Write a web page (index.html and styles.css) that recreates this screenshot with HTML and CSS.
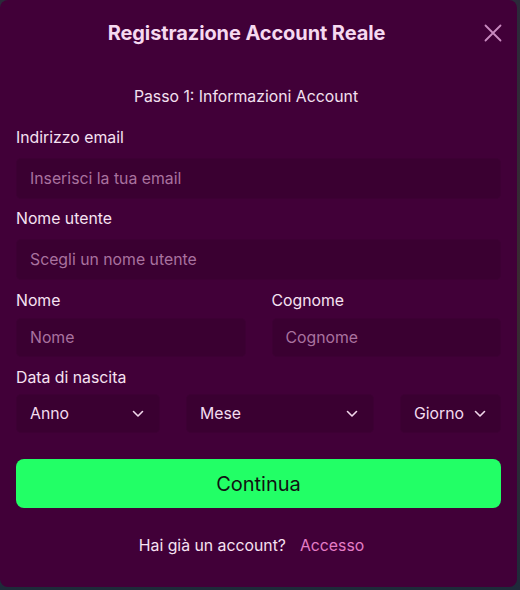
FILE: index.html
```html
<!DOCTYPE html>
<html lang="it">
<head>
<meta charset="utf-8">
<title>Registrazione Account Reale</title>
<link rel="stylesheet" href="styles.css">
</head>
<body>
<div class="modal">
  <div class="header">
    <h1 class="title">Registrazione Account Reale</h1>
    <button class="close" aria-label="Chiudi">
      <svg width="18" height="18" viewBox="0 0 18 18"><path d="M1.5 1.5 L16.5 16.5 M16.5 1.5 L1.5 16.5" stroke="#c98ac0" stroke-width="1.8" stroke-linecap="round" fill="none"/></svg>
    </button>
  </div>
  <div class="step">Passo 1: Informazioni Account</div>

  <div class="field">
    <label class="label">Indirizzo email</label>
    <div class="input">Inserisci la tua email</div>
  </div>
  <div class="field">
    <label class="label">Nome utente</label>
    <div class="input">Scegli un nome utente</div>
  </div>
  <div class="row2">
    <div class="field">
      <label class="label">Nome</label>
      <div class="input short">Nome</div>
    </div>
    <div class="field">
      <label class="label">Cognome</label>
      <div class="input short">Cognome</div>
    </div>
  </div>
  <div class="field">
    <label class="label">Data di nascita</label>
    <div class="dates">
      <div class="select anno"><span>Anno</span><svg class="chev" width="12" height="8" viewBox="0 0 12 8"><path d="M1.5 1.5 L6 6 L10.5 1.5" stroke="#f0d6ea" stroke-width="1.6" fill="none" stroke-linecap="round" stroke-linejoin="round"/></svg></div>
      <div class="select mese"><span>Mese</span><svg class="chev" width="12" height="8" viewBox="0 0 12 8"><path d="M1.5 1.5 L6 6 L10.5 1.5" stroke="#f0d6ea" stroke-width="1.6" fill="none" stroke-linecap="round" stroke-linejoin="round"/></svg></div>
      <div class="select giorno"><span>Giorno</span><svg class="chev" width="12" height="8" viewBox="0 0 12 8"><path d="M1.5 1.5 L6 6 L10.5 1.5" stroke="#f0d6ea" stroke-width="1.6" fill="none" stroke-linecap="round" stroke-linejoin="round"/></svg></div>
    </div>
  </div>

  <button class="continue">Continua</button>

  <div class="footer">Hai già un account?<a class="login" href="#">Accesso</a></div>
</div>
</body>
</html>
```
FILE: styles.css
```css
html, body {
  margin: 0;
  padding: 0;
}
body {
  width: 520px;
  height: 590px;
  background: linear-gradient(180deg, #2a2a3a 0%, #3a2a30 50%, #1e2a3a 100%);
  font-family: Inter, "Noto Sans", "Liberation Sans", sans-serif;
  overflow: hidden;
}
.modal {
  box-sizing: border-box;
  width: 517px;
  height: 587px;
  background: #410038;
  border-radius: 8px;
  padding: 0 16px;
  display: flex;
  flex-direction: column;
  color: #f3dcef;
}
.header {
  position: relative;
  height: 66px;
  display: flex;
  align-items: center;
  justify-content: center;
}
.title {
  margin: 0;
  font-size: 20px;
  font-weight: 700;
  color: #f6d9f0;
  letter-spacing: -0.1px;
  padding-right: 24px;
}
.close {
  position: absolute;
  right: -1px;
  top: 24px;
  background: none;
  border: 0;
  padding: 0;
  width: 18px;
  height: 18px;
  display: flex;
}
.step {
  text-align: center;
  font-size: 15.8px;
  line-height: 20px;
  margin-top: 21px;
  margin-bottom: 21px;
  padding-right: 25px;
  color: #f3e0f0;
}
.field {
  display: flex;
  flex-direction: column;
  margin-bottom: 10px;
}
.label {
  font-size: 15.8px;
  line-height: 20px;
  color: #f6e2f2;
  margin-bottom: 10px;
}
.input {
  box-sizing: border-box;
  height: 41px;
  background: #3a0031;
  border: 1px solid #3d0034;
  border-radius: 5px;
  padding: 0 13px;
  display: flex;
  align-items: center;
  font-size: 15.8px;
  color: #a9729f;
}
.input.short {
  height: 39px;
}
.row2 {
  display: grid;
  grid-template-columns: 1fr 1fr;
  column-gap: 26px;
  margin-top: 1px;
}
.row2 .label {
  margin-bottom: 7px;
}
.row2 .field {
  margin-bottom: 11px;
}
.dates {
  display: grid;
  grid-template-columns: 144px 188px 101px;
  column-gap: 26px;
  margin-top: -4px;
}
.select {
  box-sizing: border-box;
  height: 39px;
  background: #3a0031;
  border: 1px solid #3d0034;
  border-radius: 5px;
  padding: 0 15px 0 13px;
  display: flex;
  align-items: center;
  justify-content: space-between;
  font-size: 15.8px;
  color: #f3dcef;
}
.select.giorno {
  padding-right: 14px;
}
.continue {
  margin-top: 16px;
  height: 49px;
  border: 0;
  border-radius: 8px;
  background: #22ff66;
  color: #111111;
  font-family: inherit;
  font-size: 20px;
  font-weight: 400;
  cursor: pointer;
}
.footer {
  margin-top: 28px;
  text-align: center;
  font-size: 15.8px;
  line-height: 20px;
  padding-right: 14px;
  color: #f6e2f2;
}
.login {
  color: #e57cc6;
  text-decoration: none;
  margin-left: 14px;
}
```
